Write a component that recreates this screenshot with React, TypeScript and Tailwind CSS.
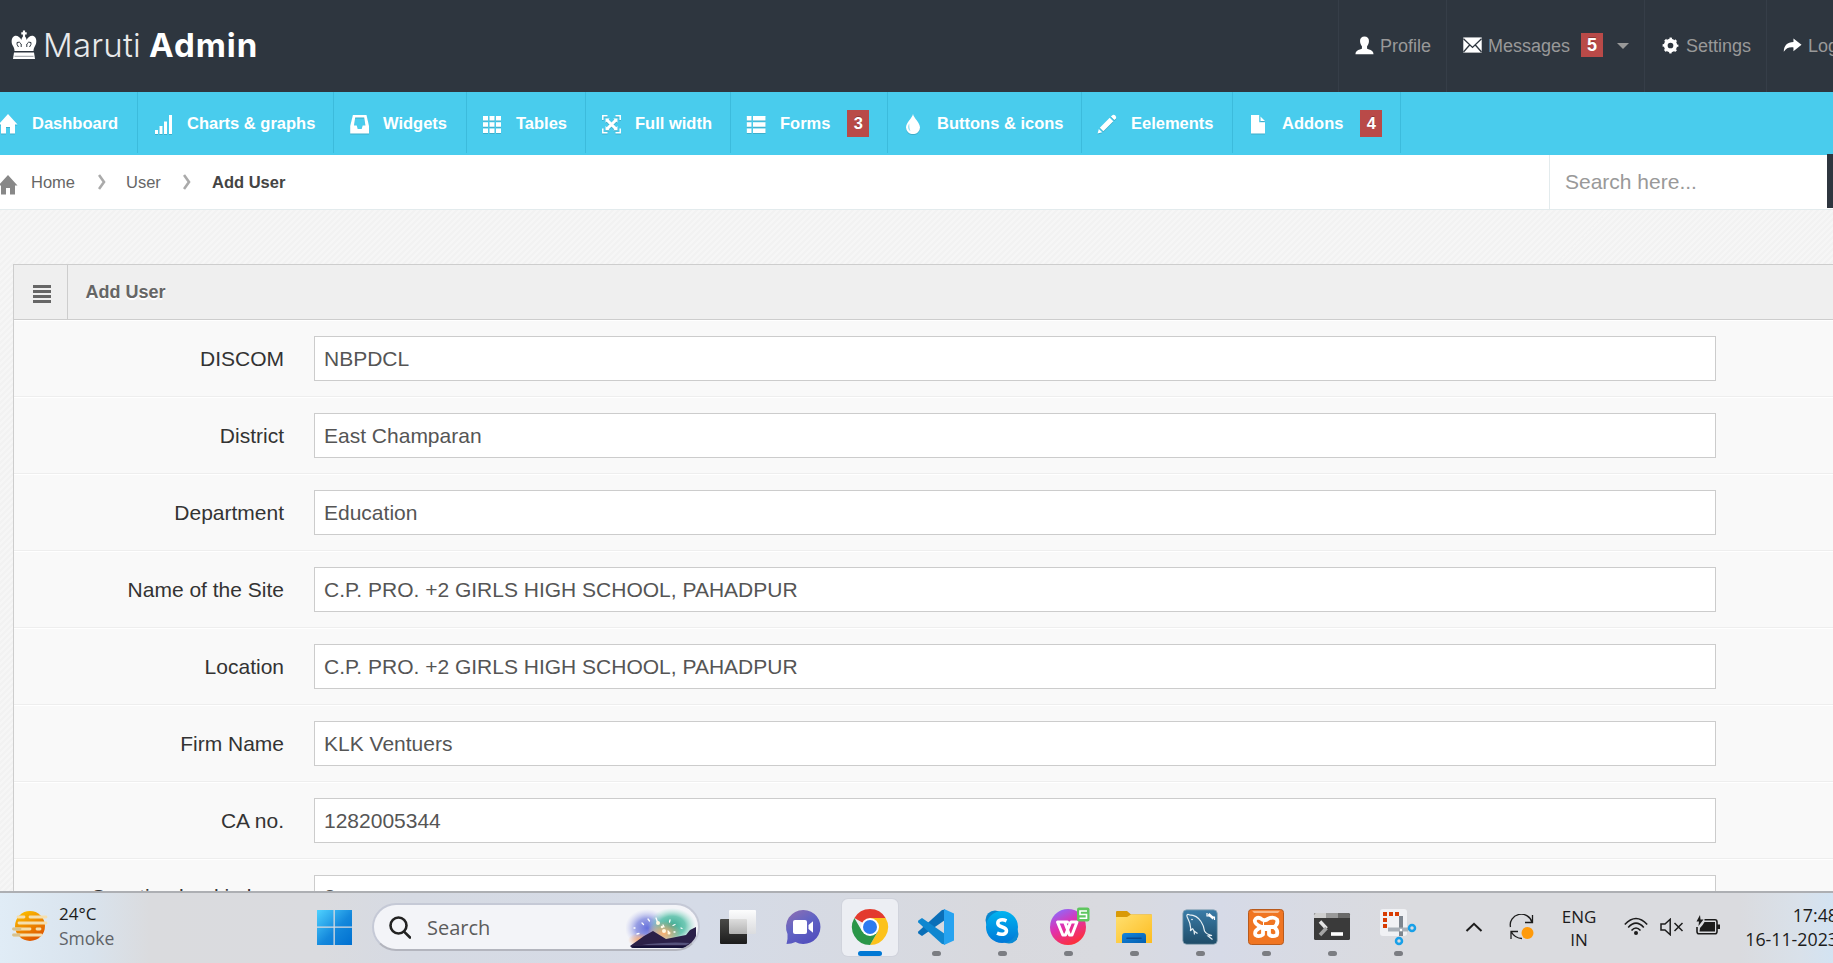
import type { ReactNode } from "react";

type IconProps = { className?: string };

const HomeIcon = ({ className }: IconProps) => (
  <svg viewBox="0 0 20 20" className={className} fill="currentColor">
    <path d="M10 0 19.5 10.5H17V19.5H12V13H8V19.5H3V10.5H.5Z" />
  </svg>
);
const ChartIcon = () => (
  <svg viewBox="0 0 20 20" width="20" height="20" fill="currentColor">
    <path d="M2 16h3v4H2zM6.500 12h3v8h-3zM11 7.500h3V20h-3zM16 1h3v19h-3z" />
  </svg>
);
const InboxIcon = () => (
  <svg viewBox="-0.700 0 20 20" width="20" height="20" fill="currentColor" fillRule="evenodd">
    <path d="M3.200 1H16.800L19.300 12V19.500H.5V12ZM5.500 3.500 4.300 11.500H7L8 15H12L13 11.500H15.700L14.500 3.500Z" />
  </svg>
);
const GridIcon = () => (
  <svg viewBox="0 0 20 20" width="20" height="20" fill="currentColor">
    <path d="M1 2h5v4.500H1zM7.500 2h5v4.500h-5zM14 2h5v4.500h-5zM1 8.300h5v4.500H1zM7.500 8.300h5v4.500h-5zM14 8.300h5v4.500h-5zM1 14.600h5v4.500H1zM7.500 14.600h5v4.500h-5zM14 14.600h5v4.500h-5z" />
  </svg>
);
const FullIcon = () => (
  <svg viewBox="-0.500 0 20 20" width="20" height="20" fill="none" stroke="currentColor">
    <path strokeWidth="1.500" d="M1.300 6V1.800H6M14 1.800h4.700V6M18.700 14.500v4.200H14M6 18.700H1.300v-4.200" />
    <path strokeWidth="3" d="M5.500 6 14.500 15M14.500 6 5.500 15" />
    <path fill="currentColor" stroke="none" d="M4 4.500h4.200L4 8.700zM16 4.500h-4.200L16 8.700zM4 16.200h4.200L4 12zM16 16.200h-4.200L16 12z" />
  </svg>
);
const ListIcon = () => (
  <svg viewBox="0 0 20 20" width="20" height="20" fill="currentColor">
    <path d="M.8 2h4.700v4.500H.8zM7 2h12.500v4.500H7zM.8 8.300h4.700v4.500H.8zM7 8.300h12.500v4.500H7zM.8 14.600h4.700v4.500H.8zM7 14.600h12.500v4.500H7z" />
  </svg>
);
const DropIcon = () => (
  <svg viewBox="0 0 20 20" width="20" height="20">
    <path fill="currentColor" d="M10 0C11 4.500 17 8.500 17 13.500A7 6.600 0 0 1 3 13.500C3 8.500 9 4.500 10 0Z" />
    <path d="M6.300 9.500C4.500 12 4.800 15.500 7.500 17.200C6.500 15 6.200 12.500 6.300 9.500Z" fill="#8fdef3" />
  </svg>
);
const PencilIcon = () => (
  <svg viewBox="0 0 20 20" width="20" height="20" fill="currentColor">
    <path d="M.6 19.500 1.800 15 5.200 18.300ZM2.800 13.800 12.700 3.800 16.300 7.300 6.300 17.300ZM13.900 2.600 15.700.9Q17 .2 18.300 1.600Q19.700 3 19 4.400L17.300 6.100Z" />
  </svg>
);
const FileIcon = () => (
  <svg viewBox="0 0 20 20" width="20" height="20" fill="currentColor">
    <path d="M3 1H11.200V8.200H17V19.500H3ZM12.500 2.500 17 7H12.500Z" />
  </svg>
);
const UserIcon = () => (
  <svg viewBox="0 0 20 20" width="19" height="19" fill="currentColor">
    <path d="M10 .5C12.800.5 14.800 2.200 14.700 5.200C14.600 8 13.800 9.300 12.700 10.700V13.500C15 14.500 19.500 15 19.500 19.200H.5C.5 15 5 14.500 7.300 13.500V10.700C6.200 9.300 5.400 8 5.300 5.200C5.200 2.200 7.200.5 10 .5Z" />
  </svg>
);
const MailIcon = () => (
  <svg viewBox="0 0 20 20" width="19" height="19" fill="none">
    <path fill="currentColor" d="M.3 1.500H19.700V17.500H.3Z" />
    <path stroke="#2e363f" strokeWidth="1.400" d="M.5 3 10 12 19.500 3M.5 16.800 7 9.500M19.500 16.800 13 9.500" />
  </svg>
);
const CogIcon = () => (
  <svg viewBox="0 0 20 20" width="19" height="19" fill="none" stroke="currentColor">
    <circle cx="10" cy="10" r="5" strokeWidth="4" />
    <circle cx="10" cy="10" r="7.300" strokeWidth="2" strokeDasharray="2.700 3.033" strokeDashoffset="1.350" />
  </svg>
);
const ShareIcon = () => (
  <svg viewBox="0 0 20 20" width="19" height="19" fill="currentColor">
    <path d="M11 2.500 19.500 9.300 11 16V12C6 11.500 3.500 13 .8 16.500C1 10 4.500 6.500 11 6.300Z" />
  </svg>
);
const CrownIcon = () => (
  <svg viewBox="0 0 26 30" width="26" height="30" fill="none">
    <path stroke="#fff" strokeWidth="2.200" d="M13 .5V8M10.300 3.300H15.700" />
    <path fill="#fff" d="M13 6C14.800 7 15.600 8.500 15.600 10C17 7 20 5 22.500 6C26 7.500 26 13 24 16C23 18 22.500 19 22.500 21H3.500C3.500 19 3 18 2 16C0 13 0 7.500 3.500 6C6 5 9 7 10.400 10C10.400 8.500 11.200 7 13 6ZM3 22.500H23L24 29H2Z" />
    <path stroke="#2e363f" strokeWidth="1" d="M7.500 17Q5.500 14.500 6 12.500Q8.500 11 10.200 14V17M18.500 17Q20.500 14.500 20 12.500Q17.500 11 15.800 14V17" />
    <path stroke="#8a9096" strokeWidth="0.900" d="M3.500 26.300H22.500" />
  </svg>
);

const Badge = ({ children, className = "" }: { children: ReactNode; className?: string }) => (
  <span
    className={`flex w-[22px] shrink-0 items-center justify-center bg-[#b94a48] font-bold text-white [text-shadow:0_-1px_0_rgba(0,0,0,0.25)] ${className}`}
  >
    {children}
  </span>
);

const navItems: { label: string; icon: ReactNode; width: string; badge?: string }[] = [
  { label: "Dashboard", icon: <HomeIcon className="size-5" />, width: "w-[155px]" },
  { label: "Charts & graphs", icon: <ChartIcon />, width: "w-[196px]" },
  { label: "Widgets", icon: <InboxIcon />, width: "w-[133px]" },
  { label: "Tables", icon: <GridIcon />, width: "w-[119px]" },
  { label: "Full width", icon: <FullIcon />, width: "w-[145px]" },
  { label: "Forms", icon: <ListIcon />, width: "w-[157px]", badge: "3" },
  { label: "Buttons & icons", icon: <DropIcon />, width: "w-[194px]" },
  { label: "Eelements", icon: <PencilIcon />, width: "w-[151px]" },
  { label: "Addons", icon: <FileIcon />, width: "w-[168px]", badge: "4" },
];

const fields = [
  ["DISCOM", "NBPDCL"],
  ["District", "East Champaran"],
  ["Department", "Education"],
  ["Name of the Site", "C.P. PRO. +2 GIRLS HIGH SCHOOL, PAHADPUR"],
  ["Location", "C.P. PRO. +2 GIRLS HIGH SCHOOL, PAHADPUR"],
  ["Firm Name", "KLK Ventuers"],
  ["CA no.", "1282005344"],
  ["Sanction load in kwp", "3"],
];

function Header() {
  const item = "flex h-full shrink-0 items-center border-l border-[#363e48]";
  return (
    <header className="flex h-[92px] shrink-0 justify-between overflow-hidden bg-[#2e363f]">
      <div className="flex items-start pt-[30px] pl-[11px] text-white">
        <CrownIcon />
        <div className="-mt-[3px] ml-[6px] flex items-baseline font-[Inter] text-[33px] leading-[36px]">
          <span className="w-[106px] font-light tracking-[0.200px] text-[#e8e9ea]">Maruti</span>
          <span className="font-bold tracking-[1px]">Admin</span>
        </div>
      </div>
      <nav className="flex w-[495px] shrink-0 text-[18px] text-[#999] [&_svg]:mr-1.5 [&_svg]:-mt-[2px] [&_svg]:text-white">
        <a className={`${item} w-[108px] pl-4`}>
          <UserIcon />
          Profile
        </a>
        <a className={`${item} w-[198px] pl-4`}>
          <MailIcon />
          Messages
          <Badge className="-mt-[2px] ml-[11px] h-6">5</Badge>
          <span className="ml-3.5 border-x-[6px] border-t-[6px] border-x-transparent border-t-[#999]" />
        </a>
        <a className={`${item} w-[122px] pl-4`}>
          <CogIcon />
          Settings
        </a>
        <a className={`${item} w-[108px] pl-4`}>
          <ShareIcon />
          Logout
        </a>
      </nav>
    </header>
  );
}

function MainNav() {
  return (
    <nav className="flex h-[63px] shrink-0 bg-[#49cced] pb-0.5">
      <div className="-ml-[17px] flex h-full">
        {navItems.map((n) => (
          <a
            key={n.label}
            className={`flex h-full shrink-0 items-center border-r border-[#3cbbdc] pt-[2px] pl-[15px] text-[16.500px] font-bold text-white ${n.width}`}
          >
            <span className="mr-[14px] drop-shadow-[0_1px_0_rgba(0,0,0,0.15)]">{n.icon}</span>
            {n.label}
            {n.badge && <Badge className="ml-[17px] h-[27px]">{n.badge}</Badge>}
          </a>
        ))}
      </div>
    </nav>
  );
}

const Chevron = () => (
  <svg viewBox="0 0 8 16" width="8" height="16" fill="none" stroke="#aaa" strokeWidth="2.600">
    <path d="M1 1 6 8 1 15" />
  </svg>
);

function Breadcrumb() {
  return (
    <div className="flex h-[55px] shrink-0 border-b border-[#e3ebed] bg-white">
      <div className="flex flex-1 items-center text-[16.500px] text-[#666]">
        <HomeIcon className="mt-[6px] -ml-[2px] size-5 text-[#888]" />
        <span className="ml-[13px] w-[67px]">Home</span>
        <Chevron />
        <span className="ml-5 w-[57px]">User</span>
        <Chevron />
        <span className="ml-[21px] font-bold text-[#444]">Add User</span>
      </div>
      <div className="flex w-[284px] items-stretch border-l border-[#e3ebed]">
        <span className="flex flex-1 items-center pl-[15px] text-[21px] text-[#999]">Search here...</span>
        <span className="-mt-px mb-px w-1.5 bg-[#2e363f]" />
      </div>
    </div>
  );
}

function UserForm() {
  return (
    <section className="ml-[13px] border-l border-[#cdcdcd] bg-[#f9f9f9]">
      <div className="flex h-14 items-stretch border-y border-[#cdcdcd] bg-[#efefef]">
        <span className="flex w-[54px] items-center justify-center border-r border-[#cdcdcd] pt-1 pl-[2px]">
          <svg viewBox="0 0 18 18" width="18" height="18" fill="#666">
            <path d="M0 0h18v3H0zM0 5h18v3H0zM0 10h18v3H0zM0 15h18v3H0z" />
          </svg>
        </span>
        <h5 className="flex items-center pl-[17.500px] text-[18px] font-bold text-[#666] [text-shadow:0_1.500px_0_#fff]">
          Add User
        </h5>
      </div>
      {fields.map(([label, value]) => (
        <div
          key={label}
          className="group flex h-[77px] items-center border-t border-b border-t-white border-b-[#eee]"
        >
          <label className="w-[270px] text-right text-[21px] text-[#333] group-last:pb-[2px]">{label}</label>
          <div className="ml-[30px] flex h-[45px] w-[1402px] items-center border border-[#ccc] bg-white pl-[9px] text-[21px] text-[#555] group-last:pb-[2px]">
            {value}
          </div>
        </div>
      ))}
    </section>
  );
}

function TaskbarSlot({ children, state }: { children?: ReactNode; state?: "active" | "open" }) {
  return (
    <div className="flex w-[66px] shrink-0 justify-center pt-1.5">
      <div
        className={`flex h-[57px] w-14 flex-col items-center rounded-md pt-2.5 ${
          state === "active" ? "bg-[#eceef3] shadow-[0_0_0_1px_#d0d3dc]" : ""
        }`}
      >
        <svg viewBox="0 0 36 36" width="36" height="36" className="overflow-visible">
          {children}
        </svg>
        {state === "active" && <span className="mt-1.5 h-[5px] w-6 rounded-full bg-[#0078d4]" />}
        {state === "open" && <span className="mt-1.5 h-[5px] w-[9px] rounded-full bg-[#7b7d82]" />}
      </div>
    </div>
  );
}

function Gradients() {
  return (
    <svg width="0" height="0" className="absolute">
      <defs>
        <linearGradient id="sun" x2="0.500" y2="1"><stop stopColor="#ffc800" /><stop offset="1" stopColor="#e05a00" /></linearGradient>
        <linearGradient id="win" x2="1" y2="1"><stop stopColor="#4fd2ff" /><stop offset="0.550" stopColor="#1488dc" /><stop offset="1" stopColor="#0070d0" /></linearGradient>
        <linearGradient id="dark" x2="0" y2="1"><stop stopColor="#4a4a48" /><stop offset="1" stopColor="#1c1c1c" /></linearGradient>
        <linearGradient id="lite" x2="0" y2="1"><stop stopColor="#fff" stopOpacity="0.950" /><stop offset="1" stopColor="#ddd" stopOpacity="0.750" /></linearGradient>
        <linearGradient id="chat" x2="0.600" y2="1"><stop stopColor="#9270b0" /><stop offset="0.500" stopColor="#6264c4" /><stop offset="1" stopColor="#5350be" /></linearGradient>
        <linearGradient id="skype" x2="0" y2="1"><stop stopColor="#00b4f0" /><stop offset="1" stopColor="#0078d8" /></linearGradient>
        <linearGradient id="wps" x1="0.200" x2="0.700" y2="1"><stop stopColor="#8a6cff" /><stop offset="0.450" stopColor="#e030b0" /><stop offset="1" stopColor="#ff3030" /></linearGradient>
        <linearGradient id="folder" x2="1" y2="1"><stop stopColor="#ffe070" /><stop offset="1" stopColor="#fdbc20" /></linearGradient>
        <linearGradient id="tray" x2="1" y2="1"><stop stopColor="#1484dc" /><stop offset="1" stopColor="#0560b0" /></linearGradient>
        <linearGradient id="sql" x2="0" y2="1"><stop stopColor="#3a7ca8" /><stop offset="1" stopColor="#1f4c68" /></linearGradient>
        <radialGradient id="blueglow"><stop stopColor="#6670dc" /><stop offset="0.500" stopColor="#8890e0" stopOpacity="0.850" /><stop offset="1" stopColor="#c0c4f0" stopOpacity="0" /></radialGradient>
        <radialGradient id="greenglow"><stop stopColor="#38a890" /><stop offset="0.550" stopColor="#58c0a8" stopOpacity="0.850" /><stop offset="1" stopColor="#a0e0d0" stopOpacity="0" /></radialGradient>
        <radialGradient id="orangeglow"><stop stopColor="#ffb070" /><stop offset="1" stopColor="#f0a070" stopOpacity="0" /></radialGradient>
      </defs>
    </svg>
  );
}

function SearchPill() {
  return (
    <div className="mt-2.5 flex h-12 w-[328px] shrink-0 items-center overflow-hidden rounded-full border-2 border-[#c5c9d6] border-b-[#b3b5be] bg-[#f3f4f8] pl-[15px]">
      <svg viewBox="0 0 22 23" width="22" height="23" fill="none" stroke="#222" strokeWidth="2.600">
        <circle cx="9.500" cy="9.500" r="8" />
        <path d="M15.300 15.800 21 21.500" strokeLinecap="round" />
      </svg>
      <span className="mt-[2px] ml-4 text-[20px] text-[#5c5c5c]">Search</span>
      <svg viewBox="0 0 72 44" width="72" height="44" className="ml-auto">
        <ellipse cx="21" cy="23" rx="22" ry="19" fill="url(#blueglow)" />
        <ellipse cx="46" cy="21" rx="24" ry="18" fill="url(#greenglow)" />
        <ellipse cx="38" cy="28" rx="17" ry="12" fill="url(#orangeglow)" />
        <ellipse cx="14" cy="35" rx="12" ry="7" fill="url(#orangeglow)" />
        <path d="M4 41 18 31 27 26 40 34 50 32 60 30 64 25 70 22V38Q66 43 60 43H6Z" fill="#2b2048" />
        <path d="M22 39Q46 36.500 64 38L60 40H16Z" fill="#55527c" />
        <path d="M6 41H62L58 43H8Z" fill="#15123a" />
        <g stroke="#fff" strokeWidth="1.300" strokeLinecap="round">
          <path d="M22 14 23.500 16M16 18 17.500 19.500M11 29 13 28.500M30 13 31.500 17M44 15 43.500 17M49 19.500 47 20.500M8 23h1M55 23 56 23.500M42 26 43 27.500M37 20 38 22M48 27h1" />
        </g>
        <g fill="#fff8e0"><circle cx="32" cy="18" r="2" /><circle cx="38" cy="26" r="2" /><circle cx="36" cy="22" r="1.300" /><circle cx="43" cy="28" r="1.500" /></g>
      </svg>
    </div>
  );
}

function Taskbar() {
  return (
    <footer className="flex h-[72px] shrink-0 overflow-hidden border-t-2 border-[#adafb3] bg-[linear-gradient(90deg,#e0ecf6_0px,#d9e3ed_90px,#dadbde_150px,#dadbdf_320px,#d6dae3_410px,#d5dbe7_700px,#d8d9de_990px,#d9dadf_1100px,#d6dae7_1220px,#dadbdf_1400px,#dadbdf_1740px,#d9e1ea_1800px,#d3e3f2_1833px)] font-['Open_Sans'] text-[#1c1c1c]">
      <Gradients />
      <div className="flex w-[301px] shrink-0">
        <svg viewBox="0 0 36 32" width="36" height="32" className="mt-[17px] ml-3 shrink-0">
          <circle cx="18" cy="16" r="15" fill="url(#sun)" />
          <g strokeWidth="2.800" strokeLinecap="round" stroke="#f5dfae">
            <path d="M6 7H12M18 7H34M7 13H34M2 19H18M25 19H28M2 25H29" />
          </g>
          <path d="M1.500 19H8M1.500 25H7" stroke="#d8c28e" strokeWidth="2.800" strokeLinecap="round" />
        </svg>
        <div className="ml-[11px] pt-[9px] text-[17px] leading-[24px]">
          <div>24°C</div>
          <div className="text-[17.500px] text-[#5f6368]">Smoke</div>
        </div>
      </div>
      <TaskbarSlot>
        <path d="M1 1h16.500v16.500H1zM18.800 1H36v16.500H18.800zM1 18.800h16.500V36H1zM18.800 18.800H36V36H18.800z" fill="url(#win)" />
      </TaskbarSlot>
      <div className="w-[5px] shrink-0" />
      <SearchPill />
      <div className="w-[5px] shrink-0" />
      <TaskbarSlot>
        <rect x="0" y="10" width="27" height="25" rx="1" fill="url(#dark)" />
        <rect x="9" y="1" width="27" height="24" rx="1" fill="url(#lite)" />
      </TaskbarSlot>
      <TaskbarSlot>
        <path d="M17.500 1A17 17 0 1 1 9.500 33Q5.500 35 .5 35Q2 30 1.500 25A17 17 0 0 1 17.500 1Z" fill="url(#chat)" />
        <rect x="7" y="11" width="14" height="14" rx="2" fill="#fff" />
        <path d="M22.500 16 27 12.200V23.800L22.500 20Z" fill="#fff" />
      </TaskbarSlot>
      <TaskbarSlot state="active">
        <path d="M18 18 2.400 9A18 18 0 0 1 33.600 9Z" fill="#e33b2e" />
        <path d="M18 9H33.600A18 18 0 0 1 18 36L25.800 22.500Z" fill="#fcc21b" />
        <path d="M10.200 22.500 2.400 9A18 18 0 0 0 18 36L25.800 22.500Z" fill="#2a9648" />
        <circle cx="18" cy="18" r="9" fill="#fff" />
        <circle cx="18" cy="18" r="7" fill="#2d7bf0" />
      </TaskbarSlot>
      <TaskbarSlot state="open">
        <path d="M27 .5V11L4 27 .3 24.500Q-.3 23.500.3 22.500L24 1Z" fill="#0a6fb8" />
        <path d="M27 35.500V25L4 9 .3 11.500Q-.3 12.500.3 13.500L24 35Z" fill="#0f87d0" />
        <path d="M26 0 36 4.500V31.500L26 36Z" fill="#27a3f0" />
      </TaskbarSlot>
      <TaskbarSlot state="open">
        <circle cx="11" cy="11" r="9.500" fill="#0a86cc" />
        <circle cx="25" cy="25" r="9.500" fill="#0a8ad4" />
        <circle cx="18" cy="18" r="16" fill="url(#skype)" />
        <path d="M22.500 11.800C18 9.800 13.800 11 13.800 14.200C13.800 19 22.500 17 22.500 21.800C22.500 25.500 17.500 26.300 13 24.200" fill="none" stroke="#fff" strokeWidth="3.500" />
      </TaskbarSlot>
      <TaskbarSlot state="open">
        <circle cx="18" cy="18" r="18" fill="url(#wps)" />
        <path d="M17.500 13H7.500L12.800 26H15.500L20.500 13.500M15 14 19.500 26H22L27 13H21" fill="none" stroke="#fff" strokeWidth="3" strokeLinejoin="round" strokeLinecap="round" />
        <rect x="27" y="-1.500" width="12.500" height="14" rx="2" fill="#5fc65f" />
        <path d="M37 2H30V5.500H36.500V9.200H29.500" fill="none" stroke="#fff" strokeWidth="1.600" />
      </TaskbarSlot>
      <TaskbarSlot state="open">
        <path d="M0 3Q0 2 1 2H11L15 5.500H35Q36 5.500 36 6.500V12H0Z" fill="#d99a08" />
        <path d="M0 8H11L15 5.500H36V34H0Z" fill="url(#folder)" />
        <path d="M6 34V27Q6 24 9 24H27Q30 24 30 27V34Z" fill="url(#tray)" />
        <path d="M11 29.300H25" stroke="#0a4a90" strokeWidth="1.600" strokeLinecap="round" />
      </TaskbarSlot>
      <TaskbarSlot state="open">
        <rect x="0.800" y="0.800" width="34.500" height="34.500" rx="4" fill="url(#sql)" stroke="#8fa8b8" strokeWidth="0.800" />
        <path d="M10.500 19.500Q7.500 23.500 8.800 20Q8.500 14 5.200 8Q4 4.500 7.500 5.800Q15 6 19 12.500Q22 17 22.500 22Q24.500 25.500 30 26.500L26 27 30.500 30.500M10.500 19.500 12 22 12.500 25.500M12 22 15.500 24.500" fill="none" stroke="#e8f0f4" strokeWidth="1.200" />
        <circle cx="10" cy="10.500" r="0.800" fill="#fff" />
        <path d="M26.500 5 31.500 9.500" stroke="#fff" strokeWidth="2.600" />
        <path d="M25 4V7H28M32.500 11V8H30" stroke="#fff" strokeWidth="1.200" fill="none" />
      </TaskbarSlot>
      <TaskbarSlot state="open">
        <rect x="0.500" y="0.500" width="35" height="35" rx="3" fill="#f07522" stroke="#b85a1c" />
        <path d="M4 1.800H32L30 4H6Z" fill="#f8b888" />
        <path d="M14 18Q6.500 15.500 6.800 11.500Q8 7.500 12.500 9.300Q16.500 13 20.500 9.500Q26 7.300 29 10.500Q30.500 15 26 18Q30.500 21.500 28.800 26Q24.500 28.500 21 25.500V20H15V25.500Q11 28.500 7.500 26Q5.500 21 14 18ZM14 18H26M15 14H16" fill="none" stroke="#fff" strokeWidth="3.800" strokeLinejoin="round" />
      </TaskbarSlot>
      <TaskbarSlot state="open">
        <rect y="4" width="36" height="27" rx="1.500" fill="#3a3a3a" />
        <path d="M1.500 4H12V9H0V5.500Z" fill="#cfcfcf" />
        <path d="M12 4H24V9H12Z" fill="#999" />
        <path d="M24 4H34.500L36 5.500V9H24Z" fill="#6a6a6a" />
        <path d="M6 12.500 12.500 19.500" stroke="#e4e4e4" strokeWidth="3.500" />
        <path d="M12.500 19 6 26" stroke="#a4a4a4" strokeWidth="3.500" />
        <path d="M17 25H29" stroke="#fff" strokeWidth="3.600" />
      </TaskbarSlot>
      <TaskbarSlot state="open">
        <rect width="27" height="27" rx="3" fill="#f0f1f4" />
        <path d="M3 3h4v4H3zM9 3h4v4H9zM15 3h4v4h-4zM3 9h4v4H3zM3 15h4v4H3z" fill="#d83b01" />
        <path d="M21 7V27" stroke="#7d858e" strokeWidth="4" />
        <path d="M8 20.500H28" stroke="#a9b0b8" strokeWidth="4" />
        <circle cx="21" cy="21" r="1.200" fill="#fff" />
        <circle cx="32" cy="19" r="3" fill="none" stroke="#18a0e8" strokeWidth="2.500" />
        <circle cx="19" cy="32" r="3" fill="none" stroke="#18a0e8" strokeWidth="2.500" />
      </TaskbarSlot>
      <svg viewBox="0 0 18 10" width="18" height="10" className="mt-[29px] ml-[34px] shrink-0" fill="none" stroke="#1c1c1c" strokeWidth="2">
        <path d="M1.500 9 9 1.800 16.500 9" />
      </svg>
      <svg viewBox="0 0 26 26" width="26" height="26" className="mt-[21px] ml-[26px] shrink-0" fill="none" stroke="#1c1c1c" strokeWidth="1.300">
        <path d="M1.500 13A11 10.500 0 0 1 23 8.500M23.500 1V8.500H16M2 25V17.500H9M2 17.500Q6 24.500 13 24.500" />
        <circle cx="18.500" cy="19" r="6" fill="#ff9a0a" stroke="none" />
      </svg>
      <div className="ml-[11px] w-[66px] shrink-0 pt-3 text-center text-[17px] leading-[23px]">
        <div>ENG</div>
        <div>IN</div>
      </div>
      <svg viewBox="0 0 24 19" width="24" height="19" className="mt-6 ml-3 shrink-0" fill="none" stroke="#1c1c1c" strokeWidth="1.600">
        <path d="M.8 7.500Q12-4.500 23.200 7.500M4.200 10.500Q12 1.800 19.800 10.500M7.500 13.500Q12 8.500 16.500 13.500" />
        <circle cx="12" cy="16" r="2" fill="#1c1c1c" stroke="none" />
      </svg>
      <svg viewBox="0 0 24 18" width="24" height="18" className="mt-[25px] ml-3 shrink-0" fill="none" stroke="#1c1c1c" strokeWidth="1.500">
        <path d="M1 6H5L10.200 1.300V16.700L5 12H1ZM14.500 5 22.500 13M22.500 5 14.500 13" />
      </svg>
      <svg viewBox="0 0 24 20" width="24" height="20" className="mt-[22px] ml-3 shrink-0" fill="none" stroke="#1c1c1c" strokeWidth="1.600">
        <path d="M8.500 4.800H19Q21 4.800 21 7V16.500Q21 18.800 19 18.800H3Q1 18.800 1 16.500V12" />
        <path d="M8.500 7H19V16.500H3.500L4 13Q7 10 8.500 7ZM21 9.500H24V14H21ZM4 0 .5 6.500H3L2.500 11 7.500 4.500H4.500Z" fill="#1c1c1c" stroke="none" />
      </svg>
      <div className="ml-[22px] w-[96px] shrink-0 pt-[9.500px] text-right text-[17.800px] leading-6 whitespace-nowrap">
        <div>17:48</div>
        <div>16-11-2023</div>
      </div>
    </footer>
  );
}

export default function App() {
  return (
    <div className="flex h-[963px] w-[1833px] flex-col overflow-hidden bg-[#f5f5f5] font-['Liberation_Sans',Arial,sans-serif]">
      <Header />
      <MainNav />
      <Breadcrumb />
      <main className="min-h-0 flex-1 overflow-hidden bg-[repeating-linear-gradient(135deg,#f2f2f2_0px,#f2f2f2_2.120px,#f6f6f6_2.120px,#f6f6f6_4.240px)] pt-[54px]">
        <UserForm />
      </main>
      <Taskbar />
    </div>
  );
}
